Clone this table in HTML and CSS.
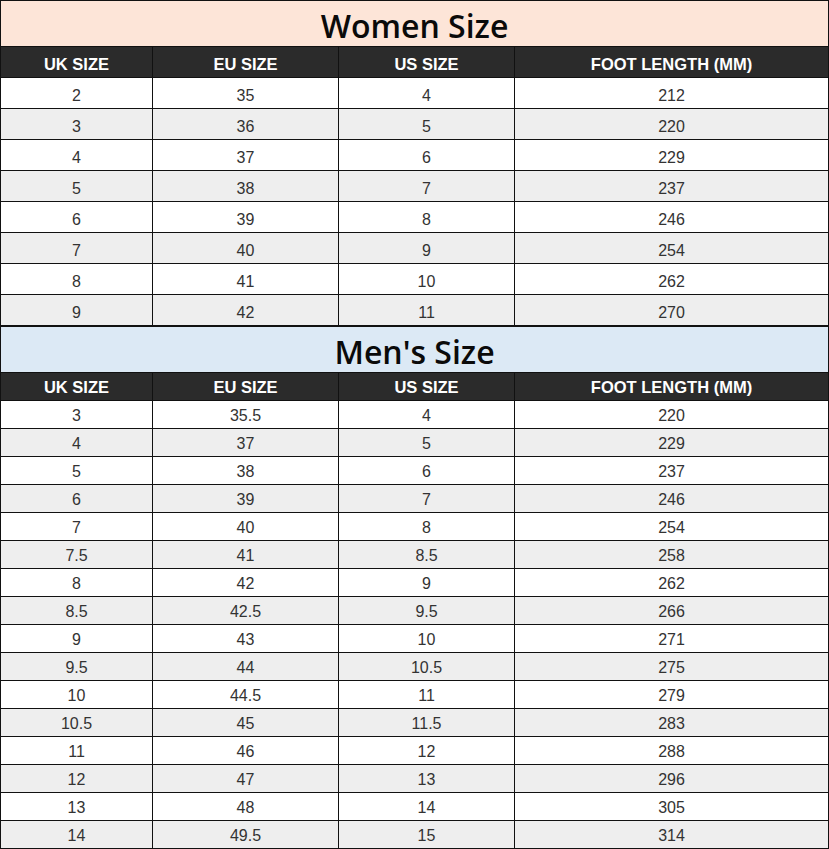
FILE: index.html
```html
<!DOCTYPE html>
<html lang="en">
<head>
<meta charset="utf-8">
<title>Size Chart</title>
<link rel="stylesheet" href="styles.css">
</head>
<body>
<div class="chart">
  <div class="sheet sheet-women">
    <div class="title title-women">Women Size</div>
    <div class="cell head">UK SIZE</div><div class="cell head">EU SIZE</div><div class="cell head">US SIZE</div><div class="cell head">FOOT LENGTH (MM)</div>
    <div class="cell">2</div><div class="cell">35</div><div class="cell">4</div><div class="cell">212</div>
    <div class="cell alt">3</div><div class="cell alt">36</div><div class="cell alt">5</div><div class="cell alt">220</div>
    <div class="cell">4</div><div class="cell">37</div><div class="cell">6</div><div class="cell">229</div>
    <div class="cell alt">5</div><div class="cell alt">38</div><div class="cell alt">7</div><div class="cell alt">237</div>
    <div class="cell">6</div><div class="cell">39</div><div class="cell">8</div><div class="cell">246</div>
    <div class="cell alt">7</div><div class="cell alt">40</div><div class="cell alt">9</div><div class="cell alt">254</div>
    <div class="cell">8</div><div class="cell">41</div><div class="cell">10</div><div class="cell">262</div>
    <div class="cell alt">9</div><div class="cell alt">42</div><div class="cell alt">11</div><div class="cell alt">270</div>
  </div>
  <div class="sheet sheet-men">
    <div class="title title-men">Men's Size</div>
    <div class="cell head">UK SIZE</div><div class="cell head">EU SIZE</div><div class="cell head">US SIZE</div><div class="cell head">FOOT LENGTH (MM)</div>
    <div class="cell">3</div><div class="cell">35.5</div><div class="cell">4</div><div class="cell">220</div>
    <div class="cell alt">4</div><div class="cell alt">37</div><div class="cell alt">5</div><div class="cell alt">229</div>
    <div class="cell">5</div><div class="cell">38</div><div class="cell">6</div><div class="cell">237</div>
    <div class="cell alt">6</div><div class="cell alt">39</div><div class="cell alt">7</div><div class="cell alt">246</div>
    <div class="cell">7</div><div class="cell">40</div><div class="cell">8</div><div class="cell">254</div>
    <div class="cell alt">7.5</div><div class="cell alt">41</div><div class="cell alt">8.5</div><div class="cell alt">258</div>
    <div class="cell">8</div><div class="cell">42</div><div class="cell">9</div><div class="cell">262</div>
    <div class="cell alt">8.5</div><div class="cell alt">42.5</div><div class="cell alt">9.5</div><div class="cell alt">266</div>
    <div class="cell">9</div><div class="cell">43</div><div class="cell">10</div><div class="cell">271</div>
    <div class="cell alt">9.5</div><div class="cell alt">44</div><div class="cell alt">10.5</div><div class="cell alt">275</div>
    <div class="cell">10</div><div class="cell">44.5</div><div class="cell">11</div><div class="cell">279</div>
    <div class="cell alt">10.5</div><div class="cell alt">45</div><div class="cell alt">11.5</div><div class="cell alt">283</div>
    <div class="cell">11</div><div class="cell">46</div><div class="cell">12</div><div class="cell">288</div>
    <div class="cell alt">12</div><div class="cell alt">47</div><div class="cell alt">13</div><div class="cell alt">296</div>
    <div class="cell">13</div><div class="cell">48</div><div class="cell">14</div><div class="cell">305</div>
    <div class="cell alt">14</div><div class="cell alt">49.5</div><div class="cell alt">15</div><div class="cell alt">314</div>
  </div>
</div>
</body>
</html>
```
FILE: styles.css
```css
html, body {
  margin: 0;
  padding: 0;
  background: #ffffff;
}

.chart {
  width: 829px;
  display: flex;
  flex-direction: column;
}

.sheet {
  display: grid;
  grid-template-columns: 151px 185px 175px 313px;
  gap: 1px;
  padding: 1px;
  background: #111111;
}

.sheet-women {
  grid-template-rows: 45px 30px;
  grid-auto-rows: 30px;
}

.sheet-men {
  grid-template-rows: 45px 27px;
  grid-auto-rows: 27px;
}

.title {
  grid-column: 1 / -1;
  display: flex;
  align-items: center;
  justify-content: center;
  padding-top: 4px;
  box-sizing: border-box;
  font-family: "Open Sans", "Noto Sans", sans-serif;
  font-weight: 600;
  font-size: 32px;
  color: #0a0a0a;
}

.title-women {
  background: #fde5d8;
}

.title-men {
  background: #dce9f5;
}

.cell {
  display: flex;
  align-items: center;
  justify-content: center;
  box-sizing: border-box;
  background: #ffffff;
  font-family: "Liberation Sans", Arial, sans-serif;
  font-size: 16px;
  color: #333333;
}

.sheet-women .cell {
  padding-top: 5px;
}

.sheet-men .cell {
  padding-top: 2px;
}

.cell.alt {
  background: #eeeeee;
}

.cell.head {
  background: #2b2b2b;
  color: #ffffff;
  font-weight: bold;
  font-size: 16.5px;
}

.sheet-women .cell.head {
  padding-top: 4px;
}
```
